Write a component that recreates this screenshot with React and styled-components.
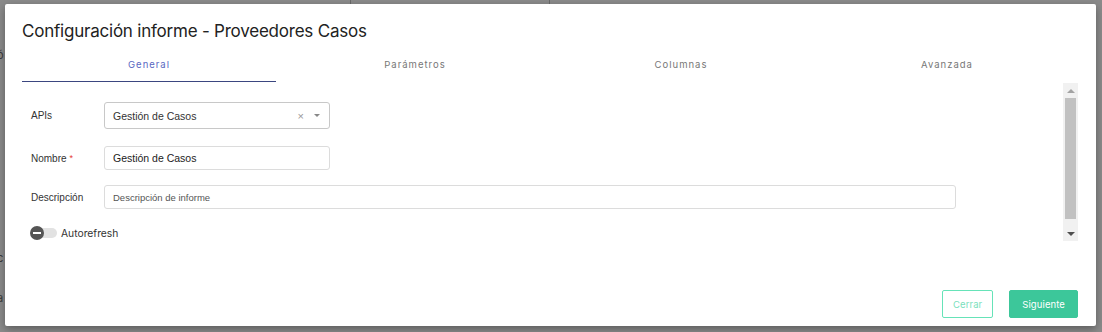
import React from 'react';
import styled, { createGlobalStyle } from 'styled-components';

const GlobalStyle = createGlobalStyle`
    html, body {
        margin: 0;
        padding: 0;
        background: #8b8b8b;
        overflow: hidden;
    }
    * {
        box-sizing: border-box;
    }
`;

/* página de fondo, tapada por el overlay */
const Backdrop = styled.div`
    width: 1102px;
    height: 332px;
    position: relative;
    background: #8b8b8b;
    font-family: 'Inter', 'Liberation Sans', sans-serif;
`;

const BackLine = styled.div`
    position: absolute;
    top: 0;
    left: ${(p) => p.$x}px;
    width: 1px;
    height: 5px;
    background: #6a6a6a;
`;

const BackLetter = styled.span`
    position: absolute;
    left: -3px;
    top: ${(p) => p.$y}px;
    font-size: 11px;
    color: #3a3a3a;
`;

const Modal = styled.div`
    position: absolute;
    top: 4px;
    left: 5px;
    width: 1091px;
    height: 322px;
    background: #fff;
    border-radius: 2px;
    box-shadow: 0 3px 8px rgba(0, 0, 0, 0.35);
    display: flex;
    flex-direction: column;
    font-family: 'Inter', 'Liberation Sans', sans-serif;
`;

const Title = styled.h2`
    margin: 0;
    padding: 16px 17px 0 17px;
    font-size: 17px;
    line-height: 22px;
    font-weight: 400;
    color: #222;
    letter-spacing: -0.22px;
`;

const TabBar = styled.div`
    display: grid;
    grid-template-columns: repeat(4, 1fr);
    margin: 4px 16px 0 11px;
    height: 36px;
`;

const Tab = styled.div`
    position: relative;
    display: flex;
    align-items: center;
    justify-content: center;
    font-size: 9.5px;
    letter-spacing: 1px;
    color: ${(p) => (p.$active ? '#5a68c2' : '#777')};

    &::after {
        content: '';
        display: ${(p) => (p.$active ? 'block' : 'none')};
        position: absolute;
        left: 6px;
        right: 6px;
        bottom: 0;
        height: 1px;
        background: #3b4680;
    }
`;

const Body = styled.div`
    display: flex;
    margin: 1px 18px 0 11px;
    height: 158px;
`;

const Form = styled.div`
    flex: 1;
    display: flex;
    flex-direction: column;
    padding: 19px 0 0 15px;
`;

const Row = styled.div`
    display: flex;
    align-items: center;
    margin-bottom: ${(p) => p.$gap}px;
`;

const Label = styled.label`
    width: 73px;
    font-family: 'Liberation Sans', Arial, sans-serif;
    font-size: 10px;
    color: #333;
`;

const Required = styled.span`
    color: #e53935;
    margin-left: 3px;
    font-size: 9px;
    vertical-align: top;
`;

const Select = styled.div`
    width: 226px;
    height: 27px;
    border: 1px solid #c8c8c8;
    border-radius: 3px;
    display: flex;
    align-items: center;
    padding: 0 9px 0 8px;
    font-family: 'Liberation Sans', Arial, sans-serif;
    font-size: 10.5px;
    color: #333;
`;

const SelectValue = styled.span`
    flex: 1;
`;

const Clear = styled.span`
    color: #999;
    font-size: 11px;
    margin-right: 10px;
`;

const Caret = styled.span`
    width: 0;
    height: 0;
    border-left: 3.5px solid transparent;
    border-right: 3.5px solid transparent;
    border-top: 3.5px solid #888;
`;

const Input = styled.input`
    width: ${(p) => p.$w}px;
    height: 24px;
    border: 1px solid #dcdcdc;
    border-radius: 3px;
    padding: 0 8px;
    font-family: 'Liberation Sans', Arial, sans-serif;
    font-size: ${(p) => (p.$small ? 9.5 : 10.5)}px;
    color: #222;
    outline: none;

    &::placeholder {
        color: #555;
    }
`;

const Toggle = styled.div`
    position: relative;
    width: 27px;
    height: 14px;
    margin-left: -1px;
`;

const Track = styled.div`
    position: absolute;
    left: 6px;
    right: 0;
    top: 2px;
    height: 10px;
    border-radius: 5px;
    background: #e2e2e2;
`;

const Knob = styled.div`
    position: absolute;
    left: 0;
    top: 0;
    width: 14px;
    height: 14px;
    border-radius: 50%;
    background: #555;
    display: flex;
    align-items: center;
    justify-content: center;

    &::before {
        content: '';
        width: 8px;
        height: 2px;
        background: #fff;
    }
`;

const ToggleText = styled.span`
    margin-left: 4px;
    font-size: 10.3px;
    color: #333;
`;

const Scrollbar = styled.div`
    width: 15px;
    height: 158px;
    background: #f1f1f1;
    display: flex;
    flex-direction: column;
    align-items: center;
`;

const Arrow = styled.div`
    height: 15px;
    display: flex;
    align-items: center;
    justify-content: center;

    &::before {
        content: '';
        border-left: 4px solid transparent;
        border-right: 4px solid transparent;
        ${(p) => (p.$up ? 'border-bottom: 4px solid #a3a3a3;' : 'border-top: 4px solid #505050;')}
    }
`;

const Thumb = styled.div`
    width: 11px;
    height: 121px;
    background: #c1c1c1;
`;

const Spacer = styled.div`
    flex: 1;
`;

const Footer = styled.div`
    display: flex;
    justify-content: flex-end;
    gap: 16px;
    padding: 0 18px 8px 0;
`;

const Button = styled.button`
    height: 28px;
    padding: 0 ${(p) => (p.$primary ? 12 : 10)}px;
    border-radius: 2px;
    border: 1px solid ${(p) => (p.$primary ? '#3cc79a' : '#66e3b8')};
    background: ${(p) => (p.$primary ? '#3cc79a' : '#fff')};
    color: ${(p) => (p.$primary ? '#fff' : '#7adfbd')};
    font-family: 'Inter', 'Liberation Sans', sans-serif;
    font-size: 9.5px;
    letter-spacing: 0.1px;
`;

export default function App() {
    return (
        <>
            <GlobalStyle />
            <Backdrop>
                <BackLine $x={350} />
                <BackLine $x={549} />
                <BackLetter $y={48}>ó</BackLetter>
                <BackLetter $y={251}>c</BackLetter>
                <BackLetter $y={291}>a</BackLetter>

                <Modal>
                    <Title>Configuración informe - Proveedores Casos</Title>
                    <TabBar>
                        <Tab $active>General</Tab>
                        <Tab>Parámetros</Tab>
                        <Tab>Columnas</Tab>
                        <Tab>Avanzada</Tab>
                    </TabBar>
                    <Body>
                        <Form>
                            <Row $gap={17}>
                                <Label>APIs</Label>
                                <Select>
                                    <SelectValue>Gestión de Casos</SelectValue>
                                    <Clear>×</Clear>
                                    <Caret />
                                </Select>
                            </Row>
                            <Row $gap={15}>
                                <Label>
                                    Nombre<Required>*</Required>
                                </Label>
                                <Input $w={226} defaultValue="Gestión de Casos" />
                            </Row>
                            <Row $gap={17}>
                                <Label>Descripción</Label>
                                <Input $w={852} $small placeholder="Descripción de informe" />
                            </Row>
                            <Row $gap={0}>
                                <Toggle>
                                    <Track />
                                    <Knob />
                                </Toggle>
                                <ToggleText>Autorefresh</ToggleText>
                            </Row>
                        </Form>
                        <Scrollbar>
                            <Arrow $up />
                            <Thumb />
                            <Spacer />
                            <Arrow />
                        </Scrollbar>
                    </Body>
                    <Spacer />
                    <Footer>
                        <Button>Cerrar</Button>
                        <Button $primary>Siguiente</Button>
                    </Footer>
                </Modal>
            </Backdrop>
        </>
    );
}
